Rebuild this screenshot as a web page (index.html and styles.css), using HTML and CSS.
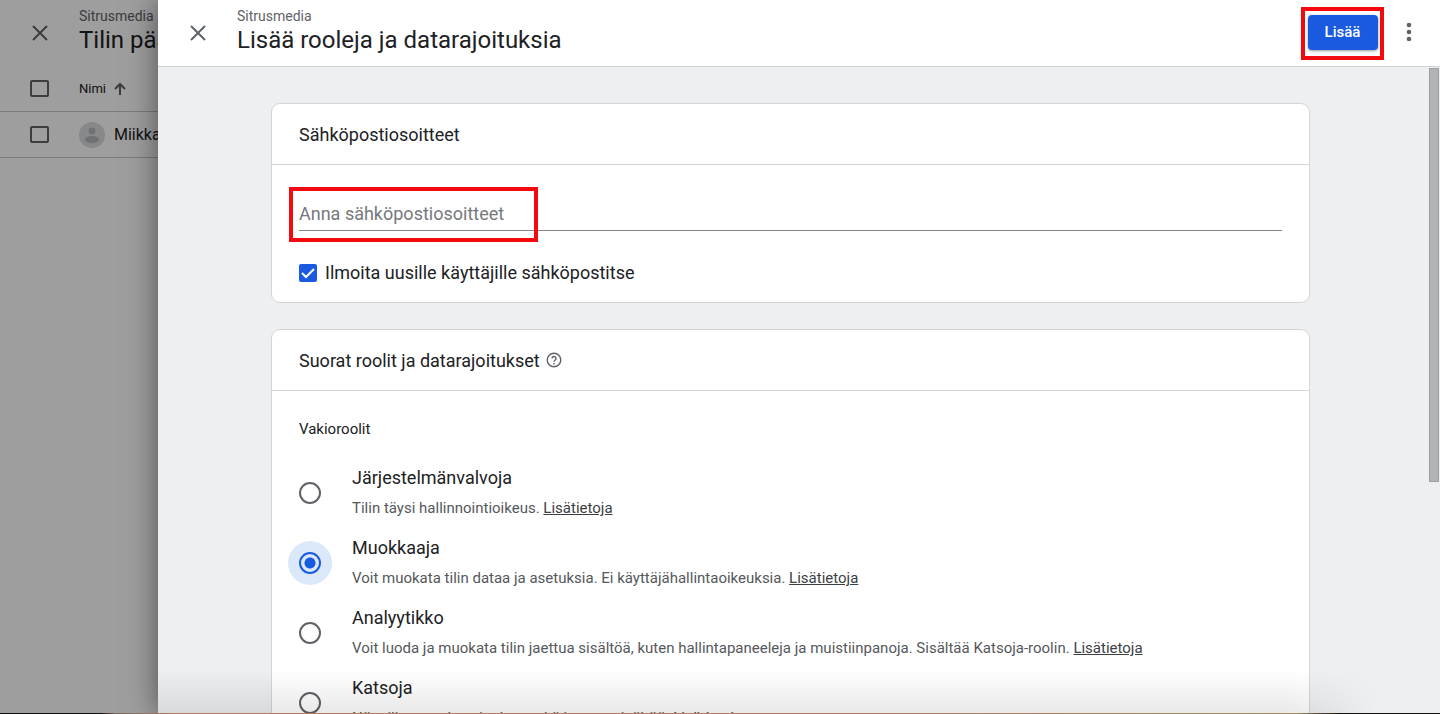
FILE: index.html
```html
<!DOCTYPE html>
<html lang="fi">

<head>
  <meta charset="UTF-8">
  <meta name="viewport" content="width=device-width, initial-scale=1.0">
  <title>Lisää rooleja ja datarajoituksia</title>
  <link rel="stylesheet" href="styles.css">
</head>

<body>
  <!-- Account page behind the drawer -->
  <div class="page">
    <header class="top-bar">
      <button class="icon-btn" aria-label="Sulje">
        <svg width="24" height="24" viewBox="0 0 24 24"><path d="M5 5l14 14M19 5L5 19" /></svg>
      </button>
      <div class="titles">
        <span class="account">Sitrusmedia</span>
        <h2 class="title">Tilin pääsy</h2>
      </div>
    </header>
    <div class="user-row">
      <input class="box" type="checkbox" aria-label="Valitse kaikki">
      <span class="column-name">Nimi</span>
      <svg class="sort" width="14" height="14" viewBox="0 0 14 14"><path d="M7 13V2M2 7l5-5 5 5" /></svg>
    </div>
    <div class="user-row user-item">
      <input class="box" type="checkbox" aria-label="Valitse Miikka">
      <svg class="avatar" width="26" height="26" viewBox="0 0 26 26">
        <circle class="avatar-bg" cx="13" cy="13" r="13" />
        <circle cx="13" cy="9" r="3.4" />
        <ellipse cx="13" cy="17.5" rx="7" ry="3.6" />
      </svg>
      <span class="user-name">Miikka</span>
    </div>
  </div>
  <div class="scrim"></div>

  <!-- Drawer -->
  <main class="drawer">
    <header class="top-bar drawer-bar">
      <button class="icon-btn" aria-label="Sulje">
        <svg width="24" height="24" viewBox="0 0 24 24"><path d="M5 5l14 14M19 5L5 19" /></svg>
      </button>
      <div class="titles">
        <span class="account">Sitrusmedia</span>
        <h1 class="title">Lisää rooleja ja datarajoituksia</h1>
      </div>
      <div class="mark mark-btn"><button class="add-btn">Lisää</button></div>
      <button class="more-btn" aria-label="Lisää toimintoja">
        <svg width="6" height="20" viewBox="0 0 6 20">
          <circle cx="3" cy="3" r="2.3" />
          <circle cx="3" cy="10" r="2.3" />
          <circle cx="3" cy="17" r="2.3" />
        </svg>
      </button>
    </header>

    <div class="drawer-body">
      <section class="card">
        <h2 class="card-head">Sähköpostiosoitteet</h2>
        <div class="email-body">
          <div class="field">
            <input class="email-input" type="text" placeholder="Anna sähköpostiosoitteet" aria-label="Anna sähköpostiosoitteet">
            <div class="mark mark-field"></div>
          </div>
          <label class="notify">
            <input class="check" type="checkbox" checked>
            <svg class="tick" width="18" height="18" viewBox="0 0 18 18"><path d="M3 9l4 4 8-8" /></svg>
            Ilmoita uusille käyttäjille sähköpostitse
          </label>
        </div>
      </section>

      <section class="card">
        <h2 class="card-head">Suorat roolit ja datarajoitukset
          <svg class="help" width="16" height="16" viewBox="0 0 16 16">
            <circle cx="8" cy="8" r="6.8" />
            <path d="M6 6.5a2 2 0 1 1 3 1.7c-.7.5-1 .8-1 1.6M8 11v1.4" />
          </svg>
        </h2>
        <div class="roles">
          <h3 class="roles-title">Vakioroolit</h3>
          <div class="role">
            <input class="radio" type="radio" name="role" id="admin">
            <div class="role-text">
              <label class="role-name" for="admin">Järjestelmänvalvoja</label>
              <p class="role-desc">Tilin täysi hallinnointioikeus. <a href="#">Lisätietoja</a></p>
            </div>
          </div>
          <div class="role">
            <input class="radio" type="radio" name="role" id="editor" checked>
            <div class="role-text">
              <label class="role-name" for="editor">Muokkaaja</label>
              <p class="role-desc">Voit muokata tilin dataa ja asetuksia. Ei käyttäjähallintaoikeuksia. <a href="#">Lisätietoja</a></p>
            </div>
          </div>
          <div class="role">
            <input class="radio" type="radio" name="role" id="analyst">
            <div class="role-text">
              <label class="role-name" for="analyst">Analyytikko</label>
              <p class="role-desc">Voit luoda ja muokata tilin jaettua sisältöä, kuten hallintapaneeleja ja muistiinpanoja. Sisältää Katsoja-roolin. <a href="#">Lisätietoja</a></p>
            </div>
          </div>
          <div class="role">
            <input class="radio" type="radio" name="role" id="viewer">
            <div class="role-text">
              <label class="role-name" for="viewer">Katsoja</label>
              <p class="role-desc">Näe tilin asetukset ja data sekä jaettua sisältöä. <a href="#">Lisätietoja</a></p>
            </div>
          </div>
        </div>
      </section>
    </div>
    <div class="scroll-thumb"></div>
    <div class="bottom-shade"></div>
  </main>
  <div class="window-edge"></div>
</body>

</html>
```

FILE: styles.css
```css
* {
  margin: 0;
  padding: 0;
  box-sizing: border-box;
}

body {
  height: 100vh;
  overflow: hidden;
  position: relative;
  background: #fff;
  color: #202124;
  font-family: Roboto, "Liberation Sans", sans-serif;
}

button {
  border: none;
  background: none;
  font-family: inherit;
}

/* Header, shared by the page and the drawer */
.top-bar {
  display: flex;
  align-items: center;
  height: 66px;
  padding-left: 28px;
}

.icon-btn {
  width: 24px;
  height: 24px;
  margin-right: 27px;
}

.icon-btn path {
  fill: none;
  stroke: #5f6368;
  stroke-width: 2;
}

.titles {
  flex: 1;
  align-self: flex-start;
  padding-top: 8px;
  white-space: nowrap;
}

.account {
  display: block;
  font-size: 14px;
  line-height: 16px;
  color: #5f6368;
}

.title {
  font-size: 24px;
  font-weight: 400;
  line-height: 32px;
}

/* Page behind */
.page {
  width: 158px;
  overflow: hidden;
}

.user-row {
  display: flex;
  align-items: center;
  height: 46px;
  padding-left: 30px;
  border-bottom: 1px solid #c4c7c9;
}

.box {
  appearance: none;
  flex: none;
  width: 19px;
  height: 17px;
  margin-right: 30px;
  border: 2px solid #5f6368;
  border-radius: 2px;
}

.column-name {
  font-size: 13px;
}

.sort {
  margin-left: 7px;
  fill: none;
  stroke: #5f6368;
  stroke-width: 2;
}

.avatar {
  flex: none;
  margin-right: 9px;
  fill: #b4b6b8;
}

.avatar-bg {
  fill: #dadcde;
}

.user-name {
  font-size: 16px;
}

.scrim {
  position: absolute;
  inset: 0;
  background: rgba(0, 0, 0, 0.38);
}

/* Drawer */
.drawer {
  position: absolute;
  inset: 0 0 0 158px;
  display: flex;
  flex-direction: column;
  background: #edeff1;
  box-shadow: 0 0 28px rgba(0, 0, 0, 0.5);
}

.drawer-bar {
  flex: none;
  height: 67px;
  background: #fff;
  border-bottom: 1px solid #d0d3d6;
}

.drawer-body {
  flex: 1;
  min-height: 0;
  overflow: hidden;
  padding: 36px 17px 0 0;
}

.add-btn {
  width: 70px;
  height: 35px;
  border-radius: 4px;
  background: #1a5ae0;
  box-shadow: 0 1px 3px rgba(0, 0, 0, 0.4);
  color: #fff;
  font-size: 15px;
  font-weight: 500;
}

.more-btn {
  width: 30px;
  height: 24px;
  margin: 0 16px 0 10px;
}

.more-btn svg {
  fill: #5f6368;
}

/* Red highlight frames */
.mark {
  border: 4px solid #f20a0e;
}

.mark-btn {
  display: flex;
  align-items: center;
  justify-content: center;
  width: 83px;
  height: 53px;
  padding-bottom: 2px;
}

.mark-field {
  position: absolute;
  top: -5px;
  left: -10px;
  width: 249px;
  height: 55px;
  pointer-events: none;
}

/* Cards */
.card {
  width: 84%;
  max-width: 1039px;
  margin: 0 auto 26px;
  border: 1px solid #d3d6d9;
  border-radius: 9px;
  background: #fff;
}

.card-head {
  display: flex;
  align-items: center;
  gap: 6px;
  height: 61px;
  padding: 0 27px;
  border-bottom: 1px solid #d3d6d9;
  font-size: 18px;
  font-weight: 400;
}

.help {
  fill: none;
  stroke: #5f6368;
  stroke-width: 1.4;
}

.email-body {
  padding: 27px 27px 17px;
}

.field {
  position: relative;
}

.email-input {
  display: block;
  width: 100%;
  height: 39px;
  padding-top: 4px;
  border: none;
  border-bottom: 1px solid #80868b;
  background: none;
  font-family: inherit;
  font-size: 18px;
}

.email-input::placeholder {
  color: #75797d;
}

.notify {
  display: flex;
  align-items: center;
  gap: 8px;
  position: relative;
  margin-top: 30px;
  font-size: 18px;
  line-height: 24px;
}

.check {
  appearance: none;
  width: 18px;
  height: 18px;
  border-radius: 2px;
  background: #1a5ae0;
}

.tick {
  position: absolute;
  left: 0;
  fill: none;
  stroke: #fff;
  stroke-width: 2;
}

/* Roles */
.roles {
  padding: 26px 27px 0;
}

.roles-title {
  margin-bottom: 25px;
  font-size: 15px;
  font-weight: 400;
  line-height: 24px;
}

.role {
  display: flex;
  align-items: flex-start;
  gap: 31px;
  height: 70px;
}

.radio {
  appearance: none;
  flex: none;
  width: 22px;
  height: 22px;
  margin-top: 16px;
  border: 2px solid #5f6368;
  border-radius: 50%;
}

.radio:checked {
  border-color: #1a5ae0;
  background: radial-gradient(circle, #1a5ae0 5px, #dbe8fa 6px);
  box-shadow: 0 0 0 11px #dbe8fa;
}

.role-name {
  display: block;
  font-size: 18px;
  line-height: 24px;
}

.role-desc {
  margin-top: 6px;
  font-size: 15px;
  line-height: 24px;
  color: #55585c;
  white-space: nowrap;
}

.role-desc a {
  color: #3c4043;
}

/* Scrollbar and bottom edge of the window */
.scroll-thumb {
  position: absolute;
  top: 68px;
  right: 1px;
  width: 10px;
  height: 58%;
  border: 1px solid #9c9ea0;
  background: #b1b3b5;
}

.bottom-shade {
  position: absolute;
  inset: auto 0 0 0;
  height: 44px;
  background: linear-gradient(rgba(0, 0, 0, 0), rgba(0, 0, 0, 0.09));
  mask-image: linear-gradient(90deg, #000 88%, transparent 95%);
}

.window-edge {
  position: absolute;
  inset: auto 0 0 0;
  height: 1px;
  background: linear-gradient(90deg, #111 0%, #111 7%, #7d6660 8%, #b87b56 12%, #b87b56 60%, #a8905c 90%, #111 93%);
}
```
